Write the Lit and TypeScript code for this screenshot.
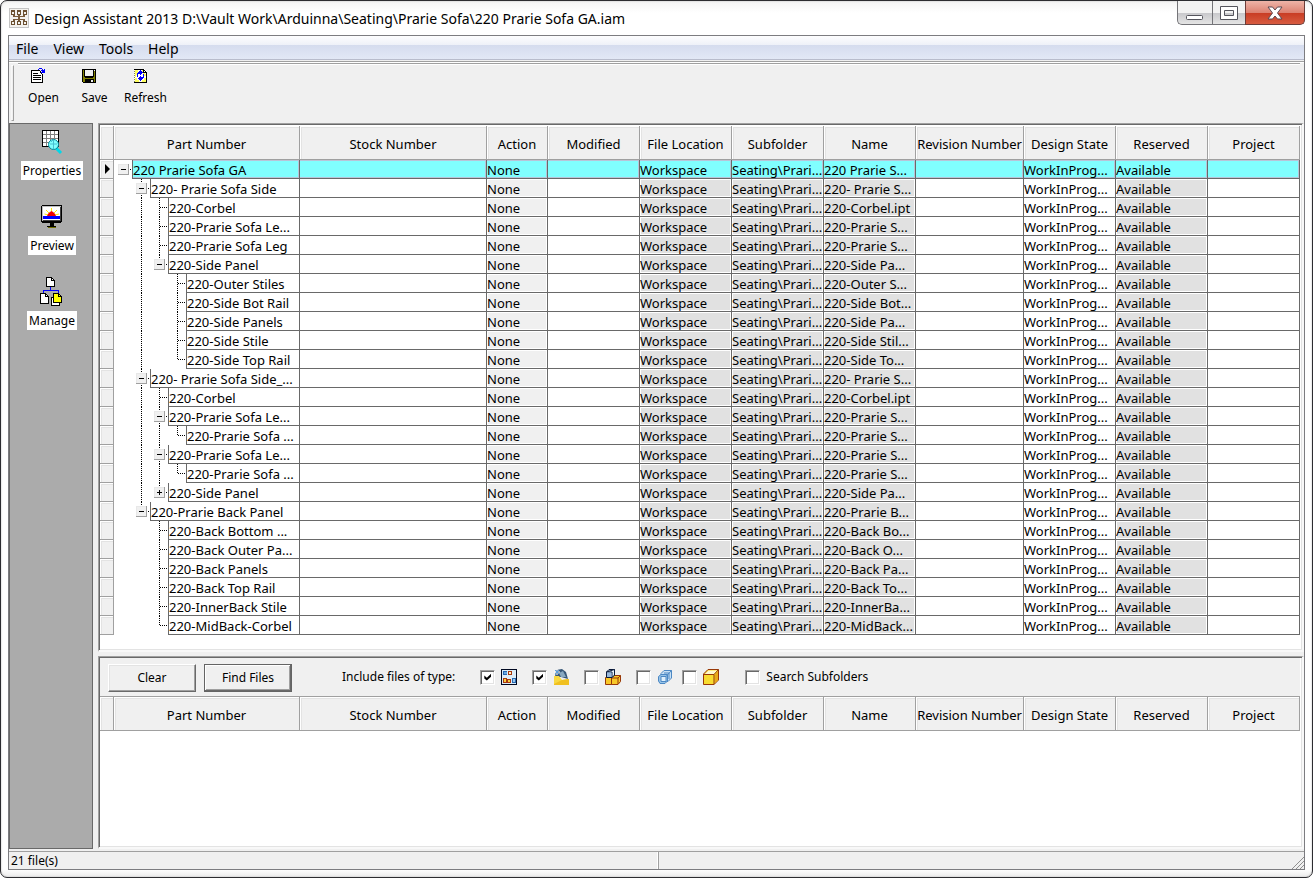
import { LitElement, html, svg, css, nothing } from "lit";
import { customElement, property, state } from "lit/decorators.js";
import { classMap } from "lit/directives/class-map.js";

interface Part {
  level: number;
  label: string;
  name: string;
  branch?: "open" | "closed";
}

const part = (level: number, label: string, name: string, branch?: "open" | "closed"): Part => ({
  level,
  label,
  name,
  branch,
});

const PARTS: Part[] = [
  part(0, "220 Prarie Sofa GA", "220 Prarie S...", "open"),
  part(1, "220- Prarie Sofa Side", "220- Prarie S...", "open"),
  part(2, "220-Corbel", "220-Corbel.ipt"),
  part(2, "220-Prarie Sofa Le...", "220-Prarie S..."),
  part(2, "220-Prarie Sofa Leg", "220-Prarie S..."),
  part(2, "220-Side Panel", "220-Side Pa...", "open"),
  part(3, "220-Outer Stiles", "220-Outer S..."),
  part(3, "220-Side Bot Rail", "220-Side Bot..."),
  part(3, "220-Side Panels", "220-Side Pa..."),
  part(3, "220-Side Stile", "220-Side Stil..."),
  part(3, "220-Side Top Rail", "220-Side To..."),
  part(1, "220- Prarie Sofa Side_...", "220- Prarie S...", "open"),
  part(2, "220-Corbel", "220-Corbel.ipt"),
  part(2, "220-Prarie Sofa Le...", "220-Prarie S...", "open"),
  part(3, "220-Prarie Sofa ...", "220-Prarie S..."),
  part(2, "220-Prarie Sofa Le...", "220-Prarie S...", "open"),
  part(3, "220-Prarie Sofa ...", "220-Prarie S..."),
  part(2, "220-Side Panel", "220-Side Pa...", "closed"),
  part(1, "220-Prarie Back Panel", "220-Prarie B...", "open"),
  part(2, "220-Back Bottom ...", "220-Back Bo..."),
  part(2, "220-Back Outer Pa...", "220-Back O..."),
  part(2, "220-Back Panels", "220-Back Pa..."),
  part(2, "220-Back Top Rail", "220-Back To..."),
  part(2, "220-InnerBack Stile", "220-InnerBa..."),
  part(2, "220-MidBack-Corbel", "220-MidBack..."),
];

const COLUMNS = [
  "Part Number",
  "Stock Number",
  "Action",
  "Modified",
  "File Location",
  "Subfolder",
  "Name",
  "Revision Number",
  "Design State",
  "Reserved",
  "Project",
];

const STEP = 18;
const ROW = 19;

/** True when a later sibling at `level` exists before the tree climbs above it. */
function continues(rows: Part[], index: number, level: number): boolean {
  for (let i = index + 1; i < rows.length; i++) {
    if (rows[i].level < level) return false;
    if (rows[i].level === level) return true;
  }
  return false;
}

@customElement("parts-grid")
export class PartsGrid extends LitElement {
  @property({ attribute: false }) rows: Part[] = [];
  @property() caption = "";
  @state() private selected = 0;

  static styles = css`
    :host {
      display: block;
      background: #fff;
    }
    table {
      width: 100%;
      table-layout: fixed;
      border-collapse: separate;
      border-spacing: 0;
      font: 13px/16px "Noto Sans", sans-serif;
      color: #000;
    }
    .marker { width: 14px; }
    .w-part { width: 186px; }
    .w-stock { width: 187px; }
    .w-action { width: 61px; }
    .w-std { width: 92px; }
    .w-rev { width: 108px; }
    th,
    td {
      padding: 2px 0 0;
      text-align: left;
      font-weight: normal;
      white-space: nowrap;
      overflow: hidden;
      box-sizing: border-box;
    }
    thead th,
    thead td {
      height: 34px;
      text-align: center;
      background: #f0f0f0;
      border-right: 1px solid #a0a0a0;
      border-bottom: 1px solid #a0a0a0;
      box-shadow: inset 1px 1px #fff, inset 2px 2px #e3e3e3;
    }
    tbody td,
    tbody th {
      height: 19px;
      border-right: 1px solid #696969;
      border-bottom: 1px solid #696969;
    }
    tbody .mark {
      padding: 0;
      background: #f0f0f0;
      border-color: #a0a0a0;
      box-shadow: inset 1px 1px #fff, inset 2px 2px #e3e3e3;
    }
    .mark svg { display: block; }
    tbody .tree { padding: 0; border-bottom: none; }
    .node { display: flex; height: 19px; }
    .guides { flex: none; display: block; }
    .toggle {
      flex: none;
      width: 18px;
      height: 19px;
      padding: 0;
      border: none;
      background: none;
    }
    .text {
      flex: 1;
      min-width: 0;
      overflow: hidden;
      height: 16px;
      padding-top: 2px;
      border-left: 1px solid #696969;
      border-bottom: 1px solid #696969;
    }
    .soft { background: #f0f0f0; box-shadow: inset 0 0 0 1px #fff; }
    .locked { background: #e1e1e1; box-shadow: inset 0 0 0 1px #fff; }
    .current .text,
    .current .cell {
      background: #80ffff;
      box-shadow: inset -1px -1px #b8c4d8, inset 0 1px #b8c4d8;
    }
  `;

  private guides(index: number, level: number) {
    const lines = [];
    for (let l = 1; l < level; l++) {
      if (continues(this.rows, index, l)) {
        lines.push(svg`<path d="M${STEP * l + 9.5} 0V${ROW}" />`);
      }
    }
    return html`<svg
      class="guides"
      width=${STEP * level}
      height=${ROW}
      stroke="#000"
      stroke-dasharray="1 1"
      aria-hidden="true"
    >
      ${lines}
    </svg>`;
  }

  private joint(index: number, row: Part) {
    const more = continues(this.rows, index, row.level);
    const down = row.level > 0 ? svg`<path d="M9.5 0V${more ? ROW : 10}" />` : nothing;
    return html`<svg class="guides" width="18" height="19" shape-rendering="crispEdges" aria-hidden="true">
      <g stroke="#000" stroke-dasharray="1 1">
        ${down}
        <path d="M10 9.5H18" />
      </g>
      ${row.branch
        ? svg`<rect x="4" y="4" width="11" height="11" fill="#a0a0a0" />
            <rect x="4" y="4" width="10" height="10" fill="#e8e8e8" />
            <rect x="5" y="5" width="9" height="9" fill="#f0f0f0" />
            <path d="M7 9.5H12" stroke="#000" />
            ${row.branch === "closed" ? svg`<path d="M9.5 7V12" stroke="#000" />` : nothing}`
        : nothing}
    </svg>`;
  }

  private renderRow(row: Part, i: number) {
    const current = i === this.selected;
    return html`<tr class=${classMap({ current })} @click=${() => (this.selected = i)}>
      <td class="mark">
        ${current
          ? html`<svg width="13" height="18" aria-hidden="true"><path d="M5 4V14L10 9Z" /></svg>`
          : nothing}
      </td>
      <th class="tree" scope="row">
        <div class="node">
          ${this.guides(i, row.level)}
          ${row.branch
            ? html`<button class="toggle" aria-label=${row.label} aria-expanded=${row.branch === "open"}>
                ${this.joint(i, row)}
              </button>`
            : this.joint(i, row)}
          <span class="text">${row.label}</span>
        </div>
      </th>
      <td class="cell"></td>
      <td class="cell soft">None</td>
      <td class="cell"></td>
      <td class="cell locked">Workspace</td>
      <td class="cell locked">Seating\\Prari...</td>
      <td class="cell locked">${row.name}</td>
      <td class="cell"></td>
      <td class="cell">WorkInProg...</td>
      <td class="cell locked">Available</td>
      <td class="cell"></td>
    </tr>`;
  }

  render() {
    return html`<table aria-label=${this.caption}>
      <colgroup>
        <col class="marker" />
        <col class="w-part" />
        <col class="w-stock" />
        <col class="w-action" />
        <col class="w-std" />
        <col class="w-std" />
        <col class="w-std" />
        <col class="w-std" />
        <col class="w-rev" />
        <col class="w-std" />
        <col class="w-std" />
        <col class="w-std" />
      </colgroup>
      <thead>
        <tr>
          <td></td>
          ${COLUMNS.map((c) => html`<th scope="col">${c}</th>`)}
        </tr>
      </thead>
      <tbody>
        ${this.rows.map((r, i) => this.renderRow(r, i))}
      </tbody>
    </table>`;
  }
}

const appIcon = html`<svg width="20" height="20" shape-rendering="crispEdges" aria-hidden="true">
  <rect x=".5" y=".5" width="19" height="19" fill="#f4f2ee" stroke="#c4c4c4" />
  <g fill="none" stroke="#6c5030">
    <path d="M2.500 3.500H5.500V6.500H2.500ZM8.500 3.500H11.500V6.500H8.500ZM14.500 3.500H17.500V6.500H14.500ZM2.500 13.500H5.500V16.500H2.500ZM8.500 13.500H11.500V16.500H8.500ZM14.500 13.500H17.500V16.500H14.500Z" />
    <path d="M2 2.500H6M8 2.500H12M14 2.500H18" />
  </g>
  <path d="M4 7H6V8H9V7H11V8H14V7H16V9H11V11H16V13H14V12H11V13H9V12H6V13H4V11H9V9H4Z" fill="#7a5c3c" />
</svg>`;

const openIcon = html`<svg width="16" height="16" shape-rendering="crispEdges" aria-hidden="true">
  <path d="M1.5 2.5H9.5L12.5 6.5V14.5H1.5Z" fill="#fff" stroke="#000" />
  <path d="M3 5.500H8M3 7.500H11M3 9.500H11M3 11.500H11" stroke="#000" />
  <path d="M8 1H9V2H8ZM9 0H12V1H9ZM12 1H13V2H14V1H15V5H11V4H12V3H11V2H12Z" fill="#0000ff" />
</svg>`;

const saveIcon = html`<svg width="16" height="16" shape-rendering="crispEdges" aria-hidden="true">
  <path d="M1 1H15V15H2L1 14Z" />
  <path d="M2 2H14V14H2Z" fill="#808000" />
  <path d="M3 1H13V9H12V10H4V9H3Z" />
  <rect x="4" y="2" width="8" height="6" fill="#f0f0f0" />
  <rect x="13" y="2" width="1" height="1" fill="#f0f0f0" />
  <rect x="4" y="11" width="9" height="4" />
  <rect x="10" y="12" width="2" height="2" fill="#f0f0f0" />
</svg>`;

const refreshIcon = html`<svg width="16" height="16" shape-rendering="crispEdges" aria-hidden="true">
  <path d="M2 1H12L15 4V15H2Z" fill="#fff" />
  <path d="M3 2H6V5H5V7H4V9H3ZM3 10H5V12H7V14H3ZM10 2H11V4H13V6H14V8H12V6H11V4H10ZM12 10H14V14H10V12H12Z" fill="#ffff60" />
  <path d="M2.500 1V15" stroke="#808060" stroke-dasharray="1 1" />
  <path d="M2 1.500H12M14.500 4V15M2 14.500H15M11.500 1V4.500H15M12.500 2V3M13.500 3V4" fill="none" stroke="#000" />
  <path d="M5 5H6V4H7V3H8V2H9V3H10V4H11V5H10V6H9V7H8V6H7V6H6V8H5ZM12 7V10H11V11H10V12H9V13H8V12H7V11H6V10H7V9H8V8H9V9H10V9H11V7Z" fill="#0000ff" />
  <path d="M5 6H6V9H5ZM11 6H12V9H11Z" fill="#0000ff" />
</svg>`;

const propertiesIcon = html`<svg width="32" height="32" shape-rendering="crispEdges" aria-hidden="true">
  <rect x="6.5" y="4.5" width="16" height="16" fill="#fff" stroke="#000" />
  <path d="M10.5 5V20M14.5 5V20M18.5 5V20M7 8.5H22M7 12.5H22M7 16.5H22" stroke="#808080" />
  <g shape-rendering="auto">
    <path d="M20 22L25 27" stroke="#00d8e8" stroke-width="3" />
    <circle cx="17.500" cy="18.500" r="5" fill="#80ffff" stroke="#008c9c" />
    <path d="M14 18H21M17.500 14V23M15 16L17 14" stroke="#48c0d0" />
  </g>
</svg>`;

const previewIcon = html`<svg width="32" height="32" shape-rendering="crispEdges" aria-hidden="true">
  <path d="M6 4H26V21H25V22H6V21H5V5H6Z" />
  <path d="M6 5H25V20H6Z" fill="#c0c0c0" />
  <path d="M7 6H25V20H7Z" fill="#404040" />
  <path d="M7 6H24V19H7Z" fill="#fff" />
  <path d="M7 15H24V18H7Z" fill="#0000ff" />
  <g shape-rendering="auto">
    <path d="M15.500 7V10M10 9L13 12M21 9L18 12M8.500 13L12 14M23 13L19 14" stroke="#ffe800" />
    <path d="M11 15C12 12 14 11 15.500 10C17 11 19 12 20 15Z" fill="#f00000" />
  </g>
  <path d="M14 22H18V25H14Z" />
  <path d="M11 25H20V26H11Z" />
  <path d="M12 26H20V27H12Z" fill="#707000" />
</svg>`;

const manageIcon = html`<svg width="32" height="32" shape-rendering="crispEdges" aria-hidden="true">
  <path d="M14.5 11V15M7.5 18V14.5H22.5V18" fill="none" stroke="#0000ff" />
  <path d="M10.5 1.5H15.5L18.5 4.5V10.5H10.5ZM4.5 17.5H9.5L12.5 20.5V27.5H4.5ZM15.5 21.5H23.5V29.5H15.5Z" fill="#fff" stroke="#000" />
  <path d="M17.500 17.500H22.500L25.500 20.500V26.500H17.500Z" fill="#ffff00" stroke="#000" />
  <path d="M15.500 1V4.500H19M9.500 17V20.500H13M22.500 17V20.500H26" fill="none" stroke="#000" />
</svg>`;

const drawingIcon = html`<svg width="17" height="17" shape-rendering="crispEdges" aria-hidden="true">
  <rect x=".5" y=".5" width="15" height="15" fill="#dcecf8" stroke="#000820" />
  <rect x="2" y="2" width="4" height="4" fill="#2868b0" />
  <rect x="3" y="3" width="3" height="2" fill="#68a8e0" />
  <rect x="7" y="2" width="4" height="4" fill="#a83810" />
  <rect x="8" y="3" width="2" height="2" fill="#fff0c0" />
  <rect x="2" y="9" width="4" height="5" fill="#a83810" />
  <rect x="3" y="10" width="2" height="3" fill="#f8d040" />
  <rect x="6" y="10" width="4" height="4" fill="#a83810" />
  <rect x="7" y="11" width="2" height="2" fill="#f8d040" />
  <rect x="11" y="9" width="4" height="5" fill="#2868b0" />
  <rect x="12" y="10" width="2" height="3" fill="#98c8f0" />
</svg>`;

const presentationIcon = html`<svg width="17" height="17" aria-hidden="true">
  <path d="M3 1L9 0L13 3L15 10L8 8L2 8Z" fill="#385878" />
  <path d="M6 4L10 2L13 8L8 8Z" fill="#88a8c0" />
  <path d="M1 7L6 7L9 11L15 10L16 16H1Z" fill="#f8d840" />
  <path d="M1 15L9 11L16 10V16H1Z" fill="#f0c020" />
  <path d="M1 3H7M4 0V6" stroke="#fff" />
  <path d="M2 1L6 5M6 1L2 5" stroke="#58a0e0" />
</svg>`;

const assemblyIcon = html`<svg width="17" height="17" aria-hidden="true">
  <g stroke-linejoin="round">
    <path d="M.5 8.500H6.500V15.500H.5ZM6.500 8.500L8.500 6.500H15.500V12.500L13 15.500H6.500Z" fill="#f8c828" stroke="#983808" />
    <path d="M6.500 9H13V15M13 9L15.500 6.500" fill="none" stroke="#983808" />
    <path d="M1.500 3L4 .5H9.500V6L7 8.500H1.500Z" fill="#a8c8e8" stroke="#081838" />
    <path d="M1.500 3H7V8.500L9.500 6V.5Z" fill="#e8f4fc" stroke="#081838" />
    <path d="M2 3.500H6.500V8H2Z" fill="#98b8dc" />
  </g>
</svg>`;

const surfaceIcon = html`<svg width="17" height="17" aria-hidden="true">
  <g fill="#c8e0f4" stroke="#4c88c4" stroke-linejoin="round">
    <path d="M4 4.500L7 1.500H14.500V9L11 12.500H4Z" />
    <path d="M1.500 7.500L4 5.500H10.500V12L8 14.500H3L1.500 12Z" fill="#98c4e8" />
    <path d="M4 7.500H9V12.500H4Z" fill="#e0f0fc" />
    <path d="M9 7.500L14.500 1.500M7 4H12V10" fill="none" />
  </g>
</svg>`;

const partIcon = html`<svg width="17" height="17" aria-hidden="true">
  <path d="M.5 5L5 .5H15.500V11L11 15.500H.5Z" fill="#f8dc30" stroke="#983808" stroke-linejoin="round" />
  <path d="M2 5L5.500 1.500H14.500L11 5Z" fill="#fff8d0" />
  <path d="M11.500 6L15 2V11L11.500 14.500Z" fill="#e8a818" />
  <path d="M.5 5.500H11V15.500M11 5.500L15.500 .5" fill="none" stroke="#983808" />
</svg>`;

@customElement("app-root")
export class AppRoot extends LitElement {
  static styles = css`
    :host {
      display: block;
      background: #fff;
      font-family: "Noto Sans", sans-serif;
      color: #000;
    }
    button { font-family: inherit; color: inherit; }
    .window {
      box-sizing: border-box;
      min-height: 100vh;
      display: flex;
      flex-direction: column;
      padding: 0 7px 7px;
      border: 1px solid #2c2c30;
      border-radius: 7px;
      background: linear-gradient(#f4f4f4, #fff 12px, #fff calc(100% - 8px), #ececec);
      box-shadow: inset 0 0 2px #b8b8b8;
    }
    .titlebar { display: flex; height: 34px; }
    .titlebar .logo { flex: none; margin: 7px 5px 0 1px; }
    h1 {
      flex: 1;
      margin: 0;
      padding-top: 8px;
      font-size: 14px;
      line-height: 20px;
      font-weight: normal;
      white-space: nowrap;
      overflow: hidden;
    }
    .caption { display: flex; height: 25px; }
    .caption button {
      box-sizing: border-box;
      height: 24px;
      padding: 0;
      border: 1px solid #747478;
      border-top: none;
      border-right: none;
      background: linear-gradient(#f2f2f2 0 12px, #c8c8cb 12px, #e4e4e4);
      display: flex;
      align-items: center;
      justify-content: center;
    }
    .caption .min { width: 35px; border-radius: 0 0 0 5px; }
    .caption .max { width: 33px; }
    .caption .close {
      width: 60px;
      border: 1px solid #6c3c38;
      border-top: none;
      border-radius: 0 0 5px 0;
      background: linear-gradient(#eeb4a8, #dc8070 12px, #c83c24 12px, #d85c40);
    }
    .caption svg { display: block; }
    .client {
      flex: 1;
      display: flex;
      flex-direction: column;
      border: 1px solid #7c7c80;
      background: #f0f0f0;
    }
    .menu {
      box-sizing: border-box;
      height: 24px;
      display: flex;
      gap: 15px;
      padding-left: 7px;
      border-bottom: 1px solid #b8bccc;
      background: linear-gradient(#fdfdfe, #eef1f8 9px, #d5dcee 9px, #e2e8f6);
    }
    .menu button {
      padding: 1px 0 0;
      border: none;
      background: none;
      font-size: 14px;
      line-height: 24px;
    }
    .toolbar {
      box-sizing: border-box;
      display: flex;
      height: 62px;
      margin-top: 1px;
      padding: 1px 4px 2px 2px;
      border-top: 1px solid #a0a0a0;
      box-shadow: inset 0 1px #fff;
      gap: 4px;
    }
    .grip {
      box-sizing: border-box;
      width: 3px;
      margin-top: 2px;
      border: 1px solid;
      border-color: #fff #a0a0a0 #a0a0a0 #f8f8f8;
    }
    .tools {
      flex: 1;
      display: flex;
      align-items: flex-start;
      border-top: 1px solid #a0a0a0;
      box-shadow: inset 0 1px #fff;
    }
    .tools button {
      width: 51px;
      margin-top: 4px;
      padding: 0;
      border: none;
      background: none;
      display: flex;
      flex-direction: column;
      align-items: center;
      gap: 6px;
      font-size: 12px;
      line-height: 16px;
    }
    .tools svg { margin-right: 12px; }
    .body { flex: 1; display: flex; gap: 5px; }
    .side {
      box-sizing: border-box;
      width: 84px;
      display: flex;
      flex-direction: column;
      align-items: center;
      gap: 21px;
      padding: 2px 0 0 2px;
      border: 1px solid #696969;
      background: #ababab;
    }
    .side button {
      padding: 0;
      border: none;
      background: none;
      display: flex;
      flex-direction: column;
      align-items: center;
      gap: 3px;
      font-size: 12px;
      line-height: 19px;
    }
    .side span { padding: 0 2px; background: #fff; }
    main {
      flex: 1;
      min-width: 0;
      display: flex;
      flex-direction: column;
      gap: 4px;
    }
    .panel {
      display: flex;
      flex-direction: column;
      border: solid;
      border-width: 1px 2px 2px 1px;
      border-color: #a0a0a0 #f8f8f8 #f8f8f8 #a0a0a0;
      padding: 1px 2px 1px 1px;
      box-shadow: inset 1px 1px #696969, inset -1px -1px #e3e3e3;
      background: #fff;
    }
    .assembly { padding-top: 2px; padding-bottom: 15px; }
    .finder { flex: 1; }
    .filters {
      box-sizing: border-box;
      height: 39px;
      display: flex;
      align-items: center;
      padding-left: 8px;
      border-bottom: 1px solid #a0a0a0;
      background: #f0f0f0;
      font-size: 12px;
      line-height: 16px;
    }
    .filters button {
      box-sizing: border-box;
      width: 88px;
      height: 28px;
      margin: 1px 8px 0 0;
      padding: 0;
      border: 1px solid;
      border-color: #fff #696969 #696969 #fff;
      box-shadow: inset -1px -1px #a0a0a0, inset 1px 1px #e3e3e3;
      background: #f0f0f0;
      font-size: 12px;
    }
    .filters .default {
      border-color: #646464;
      box-shadow: inset -1px -1px #696969, inset 1px 1px #fff, inset -2px -2px #a0a0a0;
    }
    .types { margin: 0 25px 0 42px; }
    .type {
      display: flex;
      align-items: center;
      gap: 6px;
      margin-right: 14px;
    }
    .type.near { margin-right: 8px; }
    .type.apart { margin-right: 25px; }
    .type input {
      appearance: none;
      box-sizing: border-box;
      width: 15px;
      height: 15px;
      margin: 0;
      border: 1px solid;
      border-color: #a0a0a0 #fff #fff #a0a0a0;
      box-shadow: inset 1px 1px #696969, inset -1px -1px #e3e3e3;
      background: #fff;
    }
    .type input:checked::before {
      content: "";
      display: block;
      width: 7px;
      height: 7px;
      margin: 3px;
      background: #000;
      clip-path: polygon(0 29%, 36% 60%, 100% 0, 100% 42%, 36% 100%, 0 71%);
    }
    .status {
      display: flex;
      height: 17px;
      margin-top: 2px;
      border-top: 1px solid #a0a0a0;
      font-size: 12px;
      line-height: 17px;
    }
    .status .count {
      flex: 1;
      padding-left: 2px;
      border-right: 1px solid #fff;
    }
    .status .rest {
      flex: 1;
      border-left: 1px solid #a0a0a0;
      display: flex;
      justify-content: flex-end;
      align-items: flex-end;
    }
  `;

  private filter(label: string, icon: unknown, checked: boolean, spacing = "") {
    return html`<label class="type ${spacing}">
      <input type="checkbox" aria-label=${label} .checked=${checked} />${icon}
    </label>`;
  }

  render() {
    return html`<div class="window">
      <header class="titlebar">
        <div class="logo">${appIcon}</div>
        <h1>Design Assistant 2013 D:\\Vault Work\\Arduinna\\Seating\\Prarie Sofa\\220 Prarie Sofa GA.iam</h1>
        <div class="caption">
          <button class="min" aria-label="Minimize">
            <svg width="18" height="24"><rect x=".5" y="14.500" width="16" height="4" rx="1" fill="#fff" stroke="#54545c" /></svg>
          </button>
          <button class="max" aria-label="Maximize">
            <svg width="18" height="24">
              <path d="M.5 5.500H17.500V18.500H.5ZM4.500 9.500V14.500H13.500V9.500Z" fill="#fff" fill-rule="evenodd" stroke="#54545c" />
            </svg>
          </button>
          <button class="close" aria-label="Close">
            <svg width="18" height="24">
              <path d="M2 6H6.500L9 9L11.500 6H16L11.500 12L16 18H11.500L9 15L6.500 18H2L6.500 12Z" fill="#fff" stroke="#5c4850" />
            </svg>
          </button>
        </div>
      </header>
      <div class="client">
        <nav class="menu" aria-label="Menu">
          <button>File</button><button>View</button><button>Tools</button><button>Help</button>
        </nav>
        <div class="toolbar">
          <div class="grip"></div>
          <div class="tools">
            <button>${openIcon}Open</button>
            <button>${saveIcon}Save</button>
            <button>${refreshIcon}Refresh</button>
          </div>
        </div>
        <div class="body">
          <nav class="side" aria-label="Views">
            <button>${propertiesIcon}<span>Properties</span></button>
            <button>${previewIcon}<span>Preview</span></button>
            <button>${manageIcon}<span>Manage</span></button>
          </nav>
          <main>
            <section class="panel assembly">
              <parts-grid caption="Assembly parts" .rows=${PARTS}></parts-grid>
            </section>
            <section class="panel finder">
              <div class="filters">
                <button>Clear</button>
                <button class="default">Find Files</button>
                <span class="types">Include files of type:</span>
                ${this.filter("Drawings", drawingIcon, true)}
                ${this.filter("Presentations", presentationIcon, true)}
                ${this.filter("Assemblies", assemblyIcon, false)}
                ${this.filter("Surfaces", surfaceIcon, false, "near")}
                ${this.filter("Parts", partIcon, false, "apart")}
                <label class="type"><input type="checkbox" />Search Subfolders</label>
              </div>
              <parts-grid caption="Found files"></parts-grid>
            </section>
          </main>
        </div>
        <footer class="status">
          <div class="count">21 file(s)</div>
          <div class="rest">
            <svg width="12" height="12" stroke="#909090" aria-hidden="true"><path d="M0 12L12 0M4 12L12 4M8 12L12 8" /></svg>
          </div>
        </footer>
      </div>
    </div>`;
  }
}
